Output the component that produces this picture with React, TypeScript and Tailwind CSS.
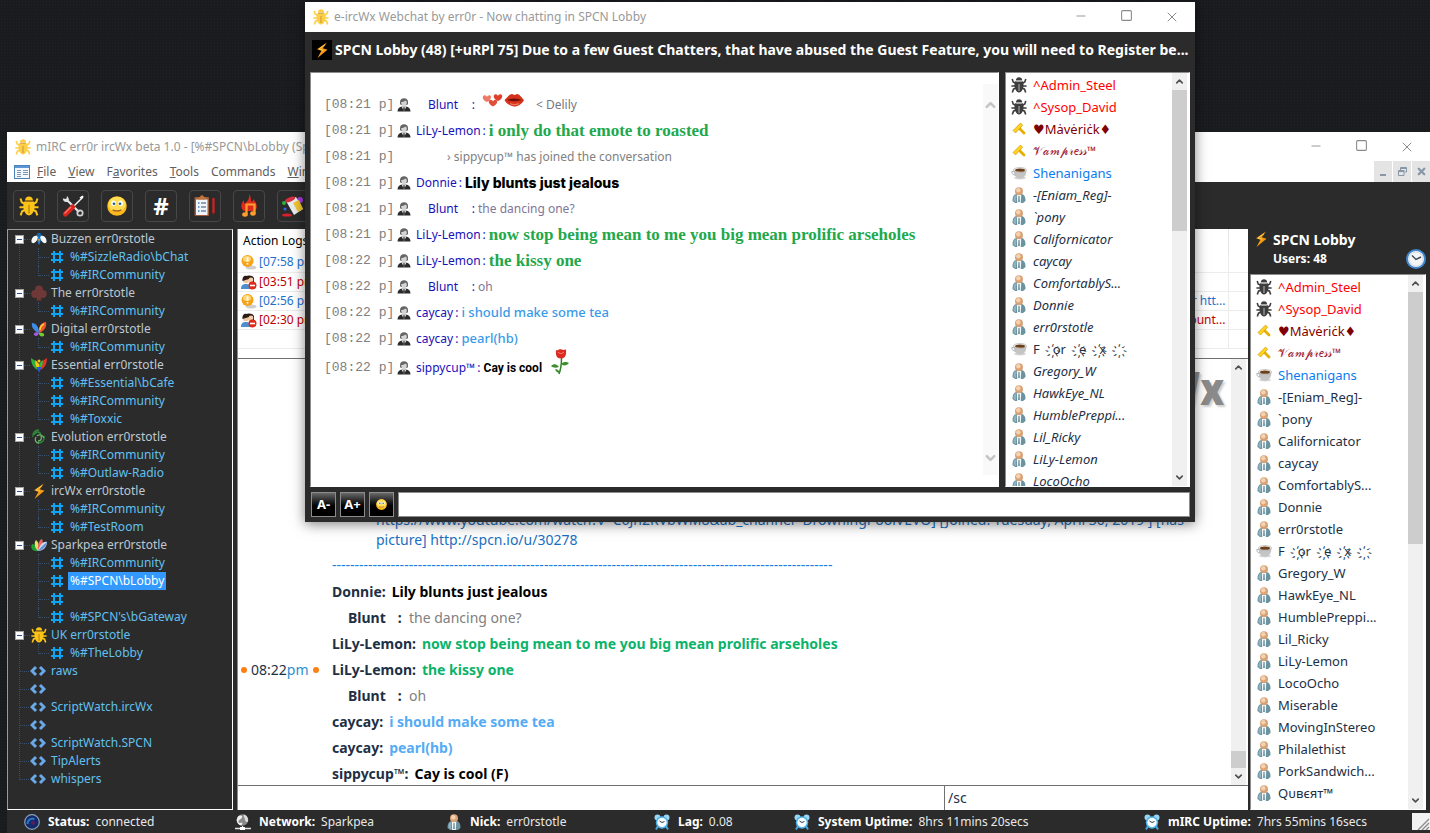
import type { ReactNode } from 'react';
import clsx from 'clsx';
import { ChevronDown, ChevronUp, Minus, Square, X } from 'lucide-react';

type IconName =
  | 'bee'
  | 'club'
  | 'butterfly'
  | 'peacock'
  | 'swirl'
  | 'bolt'
  | 'fan'
  | 'bug'
  | 'spider'
  | 'gavel'
  | 'cup'
  | 'user';

function BugShape({ fill, line }: { fill: string; line: string }) {
  return (
    <g>
      <path
        d="M5 6.5 2.2 5 1.2 2M11 6.5 13.8 5l1-3M4.500 9H.4M11.500 9h4.100M5 11l-2.500 1.200-1.200 3.300M11 11l2.500 1.200 1.200 3.300"
        stroke={fill}
        strokeWidth="1.6"
        fill="none"
      />
      <path d="M8 .3c1.900 0 3 1.200 3.200 3.200H4.800C5 1.500 6.100.3 8 .3z" fill={fill} />
      <path d="M4.200 4.300h7.600c1 2.200 1 4.900 0 7.500C10.900 14.300 9.600 15.500 8 15.500s-2.900-1.200-3.800-3.700c-1-2.600-1-5.300 0-7.500z" fill={fill} />
      <path d="M8 7v7M5.200 4.200h5.600" stroke={line} strokeWidth="0.8" />
    </g>
  );
}

function Icon({ name, className = 'h-4 w-4' }: { name: IconName; className?: string }) {
  return (
    <svg viewBox="0 0 16 16" className={clsx('shrink-0', className)} aria-hidden="true">
      {name === 'bug' && <BugShape fill="#fcc419" line="#a86d05" />}
      {name === 'spider' && <BugShape fill="#3d3d3d" line="#d8d8d8" />}
      {name === 'bee' && (
        <g>
          <path d="M7 4.500C3 4 0 7 .5 11c1 2 3 1 4 0L8 7zM9 4.500c4-.5 7 2.500 6.500 6.500-1 2-3 1-4 0L8 7z" fill="#f5f8fa" />
          <path d="M8 5c2.500 2 2 6 0 9-2-3-2.500-7 0-9z" fill="#1b7fd1" />
          <circle cx="8" cy="4" r="2.300" fill="#1668a8" />
          <path d="M6.800 8h2.400L8 11z" fill="#f0902c" />
        </g>
      )}
      {name === 'club' && (
        <g fill="#6f3838">
          <circle cx="8" cy="4.500" r="3.900" />
          <circle cx="4.200" cy="9" r="3.900" />
          <circle cx="11.800" cy="9" r="3.900" />
          <path d="M7 7h2l1.500 8.500h-5z" />
        </g>
      )}
      {name === 'butterfly' && (
        <g>
          <path d="M8 12C3 10 0 6 1 2c4 0 7 4 7 10z" fill="#3f8be8" />
          <path d="M8 12C7 6 10 1 15 1c1 5-2 9-7 11z" fill="#f0542a" />
          <path d="M8 12c3-1 6 0 5 3-3 1-5 0-5-3z" fill="#6fce2c" />
          <path d="M8 12c-3-2-6 0-5 2 2 2 4 1 5-2z" fill="#a85be0" />
          <path d="M9 9c0-3 2-5 4-6" stroke="#ffd438" strokeWidth="1.500" fill="none" />
        </g>
      )}
      {name === 'peacock' && (
        <g>
          <path d="M8 13C2 12 0 6 0 1l6 4z" fill="#2fae3a" />
          <path d="M8 13c6-1 8-7 8-12l-6 4z" fill="#e3342a" />
          <path d="M8 13C4 10 4 5 4.500 3L8 7z" fill="#f5c518" />
          <path d="M8 13c4-3 4-8 3.500-10L8 7z" fill="#2dbb40" />
          <circle cx="8" cy="4" r="1.500" fill="#f5c518" />
          <path d="M5.500 10h5L8 16z" fill="#2255dd" />
        </g>
      )}
      {name === 'swirl' && (
        <g fill="none" strokeWidth="1.300">
          <path d="M3 6C5 2 9 2 10 6M8 1C4 1 1 4 2 8M13 7c1 4-2 7-6 7" stroke="#2f8a3a" />
          <path d="M6 7c2-2 6-1 7 2M5 8c-2 3 0 6 3 6M10 7c1 3 0 5-3 5" stroke="#6cb46a" />
        </g>
      )}
      {name === 'bolt' && (
        <g>
          <path d="M13 .5 3 7.300l4.400 1.500L3.500 16 13.500 7.800 8.800 6.300z" fill="#f59a14" />
          <path d="M11 2.500 5 7l4 1.300" stroke="#ffd25a" strokeWidth="0.9" fill="none" />
        </g>
      )}
      {name === 'fan' && (
        <g>
          <path d="M7 14C1 15-1 10 1 7c3 0 5 3 6 7z" fill="#1f9e33" />
          <path d="M7 14C3 10 3 5 5 3c3 2 3 7 2 11z" fill="#e3e26a" />
          <path d="M7 14C6 8 8 3 11 2c2 4 0 9-4 12z" fill="#ee6a5a" />
          <path d="M7 14c2-7 6-10 9-9 0 5-4 9-9 9z" fill="#cfe0f5" />
          <path d="M7 14c2-3 5-6 9-9-1 5-4 8-9 9z" fill="#6a8fd8" />
        </g>
      )}
      {name === 'gavel' && (
        <g>
          <path d="M8 7l5 5" stroke="#e5ae00" strokeWidth="2.800" strokeLinecap="round" />
          <path d="M2 9.500 9.500 2l2.200 2.200L4.500 12z" fill="#ffd21f" stroke="#c99000" strokeWidth="0.6" />
        </g>
      )}
      {name === 'cup' && (
        <g>
          <ellipse cx="9" cy="13" rx="6" ry="1.500" fill="#d5d5d5" />
          <path d="M2.500 5h13c0 5-2.500 8.500-6.500 8.500S2.500 10 2.500 5z" fill="#c4c4c4" />
          <path d="M3.500 6.500H.8c0 3 1.700 3.500 3.700 3.500" stroke="#b5b5b5" fill="none" />
          <ellipse cx="9" cy="5" rx="6.500" ry="2.500" fill="#efefef" stroke="#999" strokeWidth="0.5" />
          <ellipse cx="9" cy="5.200" rx="5" ry="1.600" fill="#6b3f18" />
        </g>
      )}
      {name === 'user' && (
        <g>
          <path d="M1.500 14c0-4 1-6.500 4-7h5c3 .5 4 3 4 7L12 16H4z" fill="#6a93a0" />
          <path d="M2.500 13.500c0-3 .5-4.500 2.500-5.500v7.500z" fill="#8fb3bd" />
          <path d="M5.800 8h4.400L9.800 16H6.200z" fill="#f5f8fa" />
          <path d="M7.500 9h1l.3 6H7.200z" fill="#5a8290" />
          <circle cx="8" cy="4.200" r="4" fill="#d9a276" />
          <circle cx="7.300" cy="3.300" r="2.200" fill="#f3d2b2" />
        </g>
      )}
    </svg>
  );
}

function HashIcon() {
  return (
    <svg viewBox="0 0 12 12" className="h-3 w-3 shrink-0" aria-hidden="true">
      <path d="M3 0v12M9 0v12M0 3h12M0 9h12" stroke="#0ea5f5" strokeWidth="2" />
    </svg>
  );
}

function CodeIcon() {
  return (
    <svg viewBox="0 0 16 12" className="h-3 w-4 shrink-0" aria-hidden="true">
      <path d="M6 2 2 6l4 4M10 2l4 4-4 4" stroke="#6aa8e8" strokeWidth="3" fill="none" />
    </svg>
  );
}

function SuitIcon() {
  return (
    <svg viewBox="0 0 14 14" className="h-[14px] w-[14px] shrink-0" aria-hidden="true">
      <path d="M.5 13.500c0-3 2-4.500 4.500-5h4c2.500.5 4.500 2 4.500 5z" fill="#2b2b2b" />
      <path d="M4.500 8.500h5l-2.500 4.500z" fill="#e8e8e8" />
      <path d="M6.500 9h1l.4 3-.9 1-.9-1z" fill="#333" />
      <path d="M3 4C3 1.500 4.500.2 7 .2S11 1.500 11 4v2l-1 1H4L3 6z" fill="#666" />
      <path d="M4.200 4c1.500 0 3-.5 4-1.500.8.5 1.500 1 1.600 1.500 0 2.500-1 4.500-2.800 4.500S4.200 6.500 4.200 4z" fill="#d5d5d5" />
    </svg>
  );
}

function AlarmIcon() {
  return (
    <svg viewBox="0 0 16 16" className="h-4 w-4 shrink-0" aria-hidden="true">
      <circle cx="3.500" cy="3.500" r="3" fill="#9ad6f5" />
      <circle cx="12.500" cy="3.500" r="3" fill="#9ad6f5" />
      <path d="M4 12l-2 3.500M12 12l2 3.500" stroke="#4aa3d8" strokeWidth="2" />
      <circle cx="8" cy="8.500" r="6.200" fill="#4db2e8" />
      <circle cx="8" cy="8.500" r="4.700" fill="#f7fbfe" />
      <path d="M8 8.500 5.500 7M8 8.500l2.500-1" stroke="#345" strokeWidth="1" />
    </svg>
  );
}

function SmileyIcon({ className }: { className: string }) {
  return (
    <svg viewBox="0 0 18 18" className={className} aria-hidden="true">
      <circle cx="9" cy="9" r="8.800" fill="#ffb91a" />
      <ellipse cx="9" cy="7.500" rx="7.800" ry="6.800" fill="#ffdd55" />
      <ellipse cx="5.800" cy="6.500" rx="2.100" ry="2.500" fill="#fff" />
      <ellipse cx="12.200" cy="6.500" rx="2.100" ry="2.500" fill="#fff" />
      <circle cx="6.300" cy="7" r="1.200" fill="#245a8c" />
      <circle cx="11.700" cy="7" r="1.200" fill="#245a8c" />
      <path d="M5 12.500c2 1.300 6 1.300 8 0" stroke="#a8611b" strokeWidth="1.200" fill="none" />
    </svg>
  );
}

function ToolsIcon() {
  return (
    <svg viewBox="0 0 22 22" className="h-[22px] w-[22px]" aria-hidden="true">
      <path d="M4 4l13 13" stroke="#e6e6e6" strokeWidth="2.200" />
      <path d="M.8 3.500C1 6.500 3.500 8 6 6.500L7 4 5 .8 4.500 4z" fill="#dfe3e6" />
      <circle cx="18" cy="18" r="2.700" fill="none" stroke="#cfd3d6" strokeWidth="1.700" />
      <path d="M19 4l-8 8" stroke="#f5f5f5" strokeWidth="1.500" />
      <path d="M17.500 2.500 20.500.5l1.200 1.200-2 3z" fill="#fff" />
      <path d="M10.500 12 3.500 19" stroke="#d9261c" strokeWidth="5" strokeLinecap="round" />
      <path d="M9 12l-6.500 6.500" stroke="#ff7a6e" strokeWidth="1.200" />
    </svg>
  );
}

function ClipboardIcon() {
  return (
    <svg viewBox="0 0 22 22" className="h-[22px] w-[22px]" aria-hidden="true">
      <rect x="0.500" y="2" width="14.500" height="19" rx="1" fill="#a05c38" />
      <rect x="2" y="4.500" width="11.500" height="15.500" fill="#f1f5f9" />
      <path d="M4 4.500v-2h2c0-3 4-3 4 0h2v2z" fill="#c4753c" />
      <path d="M4 8h1.500M4 12h1.500M4 16h1.500" stroke="#3f7fc0" strokeWidth="1.600" />
      <path d="M7 8h5M7 12h5M7 16h5" stroke="#6f87a0" strokeWidth="1.300" />
      <path d="M19.500 3v15" stroke="#c42424" strokeWidth="2.400" />
      <path d="M18.300 18h2.400l-1.200 3z" fill="#8e1212" />
    </svg>
  );
}

function FireNoteIcon() {
  return (
    <svg viewBox="0 0 22 24" className="h-6 w-[22px]" aria-hidden="true">
      <path d="M11 0c3 4 1 6 3 8 1-1 1-2 1-3 4 4 5 9 2 12H6C2 14 3 9 6 6c0 2 0 3 1 4 2-3 5-5 4-10z" fill="#e02a1d" />
      <path d="M8.500 20v-9.500h8V19" stroke="#ff9d2e" strokeWidth="2.200" fill="none" />
      <ellipse cx="7" cy="20.500" rx="2.800" ry="2.200" fill="#ff9d2e" />
      <ellipse cx="15" cy="19.500" rx="2.800" ry="2.200" fill="#ff9d2e" />
    </svg>
  );
}

function PaintIcon() {
  return (
    <svg viewBox="0 0 24 24" className="h-6 w-6" aria-hidden="true">
      <circle cx="3" cy="9" r="2" fill="#24b53a" />
      <circle cx="4" cy="15" r="1.500" fill="#3568e8" />
      <circle cx="19" cy="6" r="3" fill="#a33be0" />
      <ellipse cx="6" cy="21" rx="5" ry="1.600" fill="#d8202f" />
      <path d="M5 7l10-4 7 12-9 6z" fill="#e9edf0" />
      <path d="M12 9l6-3 4 9-5 3z" fill="#f0c52c" />
      <ellipse cx="9" cy="5.500" rx="5.500" ry="2.200" transform="rotate(-22 9 5.500)" fill="#d63040" />
    </svg>
  );
}

const TOOLBAR: { label: string; icon: ReactNode }[] = [
  { label: 'Connect', icon: <Icon name="bug" className="h-5 w-5" /> },
  { label: 'Options', icon: <ToolsIcon /> },
  { label: 'Smileys', icon: <SmileyIcon className="h-5 w-5" /> },
  { label: 'Channels', icon: <span className="text-2xl leading-6 font-bold text-white">#</span> },
  { label: 'Notes', icon: <ClipboardIcon /> },
  { label: 'Music', icon: <FireNoteIcon /> },
  { label: 'Colours', icon: <PaintIcon /> },
];

interface Network {
  name: string;
  icon: IconName;
  active?: boolean;
  channels: string[];
}

const NETWORKS: Network[] = [
  { name: 'Buzzen err0rstotle', icon: 'bee', channels: ['%#SizzleRadio\\bChat', '%#IRCommunity'] },
  { name: 'The err0rstotle', icon: 'club', channels: ['%#IRCommunity'] },
  { name: 'Digital err0rstotle', icon: 'butterfly', channels: ['%#IRCommunity'] },
  { name: 'Essential err0rstotle', icon: 'peacock', channels: ['%#Essential\\bCafe', '%#IRCommunity', '%#Toxxic'] },
  { name: 'Evolution err0rstotle', icon: 'swirl', channels: ['%#IRCommunity', '%#Outlaw-Radio'] },
  { name: 'ircWx err0rstotle', icon: 'bolt', channels: ['%#IRCommunity', '%#TestRoom'] },
  {
    name: 'Sparkpea err0rstotle',
    icon: 'fan',
    channels: ['%#IRCommunity', '%#SPCN\\bLobby', '', "%#SPCN's\\bGateway"],
  },
  { name: 'UK err0rstotle', icon: 'bug', active: true, channels: ['%#TheLobby'] },
];

const WINDOWS = ['raws', '', 'ScriptWatch.ircWx', '', 'ScriptWatch.SPCN', 'TipAlerts', 'whispers'];

const SELECTED = '%#SPCN\\bLobby';

interface User {
  nick: string;
  icon?: IconName;
  className?: string;
}

const USERS: User[] = [
  { nick: '^Admin_Steel', icon: 'spider', className: 'text-[#ff0000]' },
  { nick: '^Sysop_David', icon: 'spider', className: 'text-[#ff0000]' },
  { nick: '♥Mȧvėriċk♦', icon: 'gavel', className: 'text-[#7f0000]' },
  { nick: '𝒱𝒶𝓂𝓅𝓇𝑒𝓈𝓈™', icon: 'gavel', className: 'text-[#a02030] text-xs' },
  { nick: 'Shenanigans', icon: 'cup', className: 'text-[#0a7cf0]' },
  { nick: '-[Eniam_Reg]-' },
  { nick: '`pony' },
  { nick: 'Californicator' },
  { nick: 'caycay' },
  { nick: 'ComfortablyS...' },
  { nick: 'Donnie' },
  { nick: 'err0rstotle' },
  { nick: 'F\u2003҉or\u2003҉e\u2003҉x\u2003҉', icon: 'cup', className: 'text-[#1d3045]' },
  { nick: 'Gregory_W' },
  { nick: 'HawkEye_NL' },
  { nick: 'HumblePreppi...' },
  { nick: 'Lil_Ricky' },
  { nick: 'LiLy-Lemon' },
  { nick: 'LocoOcho' },
  { nick: 'Miserable' },
  { nick: 'MovingInStereo' },
  { nick: 'Philalethist' },
  { nick: 'PorkSandwich...' },
  { nick: 'Qᴜʙєят™' },
];

const MAIN_CHAT = [
  { nick: 'Donnie:', text: 'Lily blunts just jealous', className: 'font-bold text-black' },
  { nick: 'Blunt', text: 'the dancing one?', className: 'text-[#808080]' },
  {
    nick: 'LiLy-Lemon:',
    text: 'now stop being mean to me you big mean prolific arseholes',
    className: 'font-bold text-[#0bb36b]',
  },
  { nick: 'LiLy-Lemon:', text: 'the kissy one', className: 'font-bold text-[#0bb36b]', stamp: true },
  { nick: 'Blunt', text: 'oh', className: 'text-[#808080]' },
  { nick: 'caycay:', text: 'i should make some tea', className: 'font-bold text-[#55acf5]' },
  { nick: 'caycay:', text: 'pearl(hb)', className: 'font-bold text-[#55acf5]' },
  { nick: 'sippycup™:', text: 'Cay is cool (F)', className: 'font-bold text-black' },
];

const LOGS = [
  { time: '[07:58 pm]', tail: '', alert: false },
  { time: '[03:51 pm]', tail: '', alert: true },
  { time: '[02:56 pm]', tail: 'for htt...', alert: false },
  { time: '[02:30 pm]', tail: 'account...', alert: true },
];

const STATUS: { label: string; value: string; icon: ReactNode }[] = [
  {
    label: 'Status:',
    value: 'connected',
    icon: (
      <svg viewBox="0 0 16 16" className="h-4 w-4 shrink-0" aria-hidden="true">
        <circle cx="8" cy="8" r="7.300" fill="#13296b" stroke="#8aa0b4" strokeWidth="1.200" />
        <path d="M3.500 10c0-4 3-6 7-5" stroke="#2c78c0" strokeWidth="2" fill="none" />
        <circle cx="9" cy="9" r="2" fill="#5a1f5a" />
      </svg>
    ),
  },
  {
    label: 'Network:',
    value: 'Sparkpea',
    icon: (
      <svg viewBox="0 0 16 16" className="h-4 w-4 shrink-0" aria-hidden="true">
        <circle cx="7.500" cy="6" r="5.800" fill="#8a8a8a" />
        <path d="M3 2.500c2-2 5-1 4 1S3 6 3.500 8c1 2 3 0 4 1l-1 2.500C3 11 1.500 8 1.700 5.500z" fill="#f0f0f0" />
        <path d="M9 .5c3 1 4.500 4 4 7-1.500 1-3 0-3-2S8 3 9 .5z" fill="#dcdcdc" />
        <path d="M0 14.500h16M7.500 12v2" stroke="#e5e5e5" strokeWidth="1.300" />
        <rect x="5" y="13" width="5" height="3" fill="#fff" />
      </svg>
    ),
  },
  { label: 'Nick:', value: 'err0rstotle', icon: <Icon name="user" /> },
  { label: 'Lag:', value: '0.08', icon: <AlarmIcon /> },
  { label: 'System Uptime:', value: '8hrs 11mins 20secs', icon: <AlarmIcon /> },
  { label: 'mIRC Uptime:', value: '7hrs 55mins 16secs', icon: <AlarmIcon /> },
];

function WindowButtons() {
  return (
    <div className="ml-auto flex text-[#8a8a8a]">
      <button type="button" aria-label="Minimize" className="flex w-[45px] justify-center">
        <Minus className="h-[14px] w-[14px]" strokeWidth={1.5} />
      </button>
      <button type="button" aria-label="Maximize" className="flex w-[46px] justify-center">
        <Square className="h-[13px] w-[13px]" strokeWidth={2} strokeLinejoin="miter" />
      </button>
      <button type="button" aria-label="Close" className="flex w-[46px] justify-center">
        <X className="h-4 w-4" strokeWidth={1.5} />
      </button>
    </div>
  );
}

function ScrollBar({ className, thumb }: { className: string; thumb: string }) {
  return (
    <div className={clsx('flex shrink-0 flex-col bg-[#f0f0f0] text-[#505050]', className)}>
      <ChevronUp className="h-[17px] w-full shrink-0 p-0.5" strokeWidth={3.5} />
      <div className="flex flex-1 flex-col">
        <div className={clsx('bg-[#cdcdcd]', thumb)} />
      </div>
      <ChevronDown className="h-[17px] w-full shrink-0 p-0.5" strokeWidth={3.5} />
    </div>
  );
}

function UserList({ italic, thumb }: { italic?: boolean; thumb: string }) {
  return (
    <div className="flex min-h-0 flex-1 overflow-hidden border border-[#8c8c8c] border-r-white border-b-white bg-white">
      <ul className="min-w-0 flex-1 overflow-hidden pt-px pl-[5px] text-[13px] leading-[22px]">
        {USERS.map((user) => (
          <li
            key={user.nick}
            className={clsx(
              'flex h-[22px] items-center gap-1.5 whitespace-nowrap',
              user.className ?? 'text-[#1d3045]',
              italic && !user.icon && 'italic',
            )}
          >
            <Icon name={user.icon ?? 'user'} />
            <span>{user.nick}</span>
          </li>
        ))}
      </ul>
      <ScrollBar className="mr-0.5 w-[15px]" thumb={thumb} />
    </div>
  );
}

function ChannelTree() {
  return (
    <nav className="w-[226px] shrink-0 border border-[#9a9a9a] border-r-white border-b-white text-xs leading-[18px]">
      <ul className="relative">
        <li className="absolute top-3 left-[11px] h-[538px] border-l border-dotted border-[#34506c]" aria-hidden="true" />
        {NETWORKS.map((network) => (
          <li key={network.name}>
            <div className="relative flex h-[18px] items-center pl-[7px]">
              <span className="flex h-[9px] w-[9px] items-center justify-center border border-[#a5a5a5] bg-white">
                <span className="h-px w-[5px] bg-[#2a4a9a]" />
              </span>
              <span className="mr-px w-1.5 border-t border-dotted border-[#34506c]" />
              <Icon name={network.icon} />
              <span className={clsx('pl-1', network.active ? 'text-[#62c0f0]' : 'text-[#bcc8d2]')}>{network.name}</span>
            </div>
            <ul className="ml-[30px]">
              {network.channels.map((channel, i) => (
                <li key={i} className="flex h-[18px] items-center">
                  <span
                    className={clsx(
                      'w-[11px] self-start border-l border-dotted border-[#34506c]',
                      i === network.channels.length - 1 ? 'h-[10px]' : 'h-[18px]',
                    )}
                  >
                    <span className="block h-[10px] border-b border-dotted border-[#34506c]" />
                  </span>
                  <span className="w-0.5" />
                  <HashIcon />
                  <button
                    type="button"
                    aria-label={channel || 'Unnamed channel'}
                    className={clsx(
                      'ml-[5px] h-[18px] pr-0.5 pl-0.5 whitespace-nowrap',
                      channel === SELECTED ? 'bg-[#3399ff] text-white' : 'text-[#62c0f0]',
                    )}
                  >
                    {channel}
                  </button>
                </li>
              ))}
            </ul>
          </li>
        ))}
        {WINDOWS.map((name, i) => (
          <li key={i} className="flex h-[18px] items-center pl-[11px] text-[#62c0f0]">
            <span className="mr-px w-2.5 border-t border-dotted border-[#34506c]" />
            <CodeIcon />
            <span className="pl-[5px]">{name}</span>
          </li>
        ))}
      </ul>
    </nav>
  );
}

function ActionLogs() {
  return (
    <div className="h-[130px] shrink-0 overflow-hidden border-b border-[#707070] bg-white">
      <table className="w-full table-fixed text-xs">
        <thead>
          <tr className="h-6">
            <th className="border-r border-[#e5e5e5] pl-[5px] text-left font-normal text-black">Action Logs</th>
            <th className="w-5" />
          </tr>
        </thead>
        <tbody>
          {LOGS.map((log) => (
            <tr
              key={log.time}
              className={clsx('h-[19px] border-b border-[#ececec]', log.alert ? 'text-[#c00000]' : 'text-[#1e70cc]')}
            >
              <td className="border-r border-[#ececec] p-0">
                <div className="flex h-[18px] items-center pr-0.5 pl-[3px]">
                  <svg viewBox="0 0 16 16" className="mr-0.5 h-4 w-4" aria-hidden="true">
                    {log.alert ? (
                      <g>
                        <circle cx="5" cy="6" r="3.200" fill="#f0c8a4" />
                        <path d="M1.500 7C1 2 4 1 6 2c1-1 6-1 7 2v5H9L8 5z" fill="#2e1c14" />
                        <path d="M0 15c0-4 2-5 5-5s4 1 5 5z" fill="#4b8fd0" />
                        <circle cx="10" cy="6" r="2.400" fill="#f3cfae" />
                        <circle cx="11.500" cy="11.500" r="4" fill="#dd2a1b" />
                        <path d="M9 11.500h5" stroke="#fff" strokeWidth="1.600" />
                      </g>
                    ) : (
                      <g>
                        <ellipse cx="10" cy="13.500" rx="5.500" ry="2" fill="#cfcfcf" />
                        <circle cx="6.500" cy="7" r="6" fill="#f7a31a" />
                        <ellipse cx="6" cy="5" rx="4" ry="3" fill="#ffd778" />
                        <path d="M6.500 3.500v4M6.500 9v1.500" stroke="#fff" strokeWidth="1.700" />
                      </g>
                    )}
                  </svg>
                  <span>{log.time}</span>
                  <span className="ml-auto">{log.tail}</span>
                </div>
              </td>
              <td />
            </tr>
          ))}
          <tr className="h-[19px] border-b border-[#ececec]">
            <td className="border-r border-[#ececec]" />
            <td />
          </tr>
        </tbody>
      </table>
    </div>
  );
}

function ChatLog() {
  return (
    <div className="relative flex min-h-0 flex-1 overflow-hidden bg-white">
      <div className="absolute top-0 right-6 font-['Roboto',sans-serif] text-[46px] leading-[60px] font-black text-[#8a8a8a] [text-shadow:2px_2px_2px_#d0d0d0]">
        ircWx
      </div>
      <div className="-mb-0.5 flex min-w-0 flex-1 flex-col justify-end text-sm">
        <p className="mb-[3px] ml-[138px] max-w-[830px] leading-5 text-[#1a6fc0]">
          https://www.youtube.com/watch?v=C6Jh2RVbWM8&amp;ab_channel=DrowningPoolVEVO] [Joined: Tuesday, April 30, 2019 ]
          [has
          <br />
          picture] http://spcn.io/u/30278
        </p>
        <p className="ml-[94px] h-[26px] leading-6 whitespace-nowrap text-[#1a80e0]">{'-'.repeat(111)}</p>
        {MAIN_CHAT.map((line, i) => (
          <div key={i} className="flex h-[26px] items-center whitespace-nowrap">
            <div className="flex w-[94px] items-center gap-1 pl-[3px] text-[#1d3045]">
              {line.stamp && (
                <>
                  <span className="h-1.5 w-1.5 rounded-full bg-[#ff7f11]" />
                  <span>
                    08:22<span className="text-[#2b8fcf]">pm</span>
                  </span>
                  <span className="h-1.5 w-1.5 rounded-full bg-[#ff7f11]" />
                </>
              )}
            </div>
            {line.nick === 'Blunt' ? (
              <span className="flex w-[77px] gap-3 pl-4 font-bold text-[#1d3045]">
                <span>Blunt</span>
                <span>:</span>
              </span>
            ) : (
              <span className="pr-1.5 font-bold text-[#1d3045]">{line.nick}</span>
            )}
            <span className={line.className}>{line.text}</span>
          </div>
        ))}
      </div>
      <ScrollBar className="mr-0.5 w-[15px]" thumb="mt-auto h-[17px]" />
    </div>
  );
}

function MainWindow() {
  return (
    <section className="absolute top-[132px] right-0 bottom-0 left-[7px] flex flex-col bg-[#2b2b2b]">
      <header className="flex h-[29px] shrink-0 items-center bg-white">
        <Icon name="bug" className="mr-[5px] ml-2 h-4 w-4 opacity-80" />
        <h1 className="text-xs text-[#999]">mIRC err0r ircWx beta 1.0 - [%#SPCN\bLobby (Sparkpea)]</h1>
        <WindowButtons />
      </header>
      <div className="flex h-[21px] shrink-0 items-center bg-white pl-[7px] text-xs text-[#606060]">
        <svg viewBox="0 0 16 14" className="h-[14px] w-4" aria-hidden="true">
          <rect x="0.500" y="0.500" width="15" height="13" fill="#f4f8fc" stroke="#4a80bc" />
          <rect x="1" y="1" width="14" height="2" fill="#5b96d6" />
          <path d="M3 5.500h4M3 7.500h4M3 9.500h4M3 11.500h4M9 5.500h5M9 7.500h5M9 9.500h5" stroke="#7a98b8" />
        </svg>
        <div className="flex gap-3 pl-[7px]">
          <button type="button"><u>F</u>ile</button>
          <button type="button"><u>V</u>iew</button>
          <button type="button">F<u>a</u>vorites</button>
          <button type="button"><u>T</u>ools</button>
          <button type="button">Commands</button>
          <button type="button"><u>W</u>indow</button>
        </div>
        <div className="ml-auto flex h-full gap-px text-[#8797a8]">
          <button type="button" aria-label="Minimize child" className="flex w-[18px] items-end justify-center bg-[#e4e4e4] pb-1.5">
            <span className="h-0.5 w-1.5 bg-[#8797a8]" />
          </button>
          <button type="button" aria-label="Restore child" className="flex w-[18px] items-center justify-center bg-[#e4e4e4]">
            <svg viewBox="0 0 9 9" className="h-[9px] w-[9px]" fill="none" stroke="currentColor" aria-hidden="true">
              <path d="M2.500 3V.5h6v4.500H6.500M3 1.500h5M.5 3.500h5.500v5H.5zM1 4.500h5" />
            </svg>
          </button>
          <button type="button" aria-label="Close child" className="flex w-[18px] items-center justify-center bg-[#e4e4e4]">
            <X className="h-[11px] w-[11px]" strokeWidth={5} />
          </button>
        </div>
      </div>
      <div className="flex h-[47px] shrink-0 items-center gap-3 pl-1.5">
        {TOOLBAR.map((tool) => (
          <button
            key={tool.label}
            type="button"
            aria-label={tool.label}
            className="flex h-8 w-8 items-center justify-center rounded-sm border border-[#474747]"
          >
            {tool.icon}
          </button>
        ))}
      </div>
      <div className="flex min-h-0 flex-1">
        <ChannelTree />
        <div className="ml-1 flex min-w-0 flex-1 flex-col border-l border-[#8c8c8c] bg-white">
          <ActionLogs />
          <ChatLog />
          <div className="flex h-[25px] shrink-0 border-t border-[#707070] text-sm">
            <input aria-label="Server command" className="w-[70%] border-r border-[#707070] bg-white" />
            <input aria-label="Message" defaultValue="/sc" className="min-w-0 flex-1 bg-white px-[3px] text-[#1d3045]" />
          </div>
        </div>
        <aside className="flex w-[182px] shrink-0 flex-col pr-1 pl-0.5">
          <div className="flex h-[45px] shrink-0 font-bold text-white">
            <Icon name="bolt" className="mt-0.5 ml-px h-4 w-5" />
            <div className="flex-1 pl-0.5">
              <div className="text-sm leading-[22px]">SPCN Lobby</div>
              <div className="text-xs leading-4">Users: 48</div>
            </div>
            <svg viewBox="0 0 20 20" className="mt-5 h-5 w-5" aria-hidden="true">
              <circle cx="10" cy="10" r="9" fill="#f4f6f8" stroke="#3f86cc" strokeWidth="2" />
              <circle cx="10" cy="10" r="7" fill="none" stroke="#cdd6de" strokeWidth="0.8" />
              <path d="M6 6.500 10 10.500l5-2.500" stroke="#3c4a58" strokeWidth="1.400" fill="none" />
            </svg>
          </div>
          <UserList thumb="h-[252px]" />
        </aside>
      </div>
      <footer className="flex h-[23px] shrink-0 items-center pl-[17px] text-xs text-[#e8e8e8]">
        <dl className="grid flex-1 grid-cols-[211fr_211fr_208fr_140fr_350fr_268fr] whitespace-nowrap">
          {STATUS.map((item) => (
            <div key={item.label} className="flex items-center">
              {item.icon}
              <dt className="pr-1.5 pl-2 font-bold text-white">{item.label}</dt>
              <dd>{item.value}</dd>
            </div>
          ))}
        </dl>
        <svg viewBox="0 0 18 17" className="h-[17px] w-[18px]" aria-hidden="true">
          <rect width="18" height="17" fill="#f2f2f2" />
          <path d="M6 17 17 6M10 17l7-7M14 17l3-3" stroke="#8c8c8c" strokeWidth="1.400" />
        </svg>
      </footer>
    </section>
  );
}

function HeartsKiss() {
  return (
    <svg viewBox="0 0 42 16" className="mr-2 mb-2 ml-1 h-4 w-[42px]" aria-hidden="true">
      <path d="M5 9C0 7 0 3 2 2.500 3.500 2 4.500 3 5 4c.5-1 1.500-2 3-1.500C10 3 9 7 5 9z" fill="#ec7a66" />
      <path d="M16 8c-5-2-5-6-3-6.500C14.500 1 15.500 2 16 3c.5-1 1.500-2 3-1.500C21 2 21 6 16 8z" fill="#e0402b" />
      <path d="M11 13.500C6 11 6 7.500 8 7c1.500-.5 2.500.5 3 1.500.5-1 1.500-2 3-1.500 2 .5 2 4-3 6.500z" fill="#e24f38" />
      <path d="M22.500 7c3-3 5-6 7.500-6 1 0 1.500 1 2.500 1S34 1 35 1c2.500 0 4 3 7 6-2 4-6 6.500-9.500 6.500S24.500 11 22.500 7z" fill="#d5321c" />
      <path d="M25 7c5-2 10-2 15 0-5 1.500-10 1.500-15 0z" fill="#6e0f0a" />
      <path d="M28 10.500c3 1.500 6 1.500 9 0" stroke="#f07a60" strokeWidth="1.200" fill="none" />
    </svg>
  );
}

function Rose() {
  return (
    <svg viewBox="0 0 20 26" className="mb-3 ml-2 h-[26px] w-5" aria-hidden="true">
      <path d="M11.500 9c0 6-.5 11-2.500 16" stroke="#2f7d27" strokeWidth="1.500" fill="none" />
      <path d="M1 17c3-3 6-2 8 1-3 1-6 1-8-1zM11 15c3-3 6-2 8-1-2 3-6 3-8 1zM5 20c1 3 3 4 5 4-1-3-3-4-5-4z" fill="#3c8f2e" />
      <path d="M6 1c1 1 2 0 3-.5C10 0 12 0 13 1l3-.5C16.500 6 15.500 9.500 11 9.500S5.500 6 6 1z" fill="#dc2a20" />
      <path d="M8 3c2 2 4 2 6 0" stroke="#ff8a7a" fill="none" />
    </svg>
  );
}

interface PopupLine {
  time: string;
  nick?: string;
  body: ReactNode;
}

const serifGreen = "font-['Liberation_Serif',serif] text-[17px] font-bold text-[#22a84a]";
const blueScript = 'text-[13px] font-medium text-[#3a9ae8]';

const POPUP_LINES: PopupLine[] = [
  {
    time: '08:21',
    nick: 'Blunt',
    body: (
      <span className="flex items-center text-xs text-[#77777f]">
        <HeartsKiss /> <span className="pl-1">&lt; Delily</span>
      </span>
    ),
  },
  { time: '08:21', nick: 'LiLy-Lemon', body: <span className={serifGreen}>i only do that emote to roasted</span> },
  {
    time: '08:21',
    body: <span className="pl-[50px] text-xs text-[#808080]">› sippycup™ has joined the conversation</span>,
  },
  {
    time: '08:21',
    nick: 'Donnie',
    body: <span className="font-['Inter',sans-serif] text-sm font-extrabold text-black">Lily blunts just jealous</span>,
  },
  { time: '08:21', nick: 'Blunt', body: <span className="text-xs text-[#80769a]">the dancing one?</span> },
  {
    time: '08:21',
    nick: 'LiLy-Lemon',
    body: <span className={serifGreen}>now stop being mean to me you big mean prolific arseholes</span>,
  },
  { time: '08:22', nick: 'LiLy-Lemon', body: <span className={serifGreen}>the kissy one</span> },
  { time: '08:22', nick: 'Blunt', body: <span className="text-xs text-[#80769a]">oh</span> },
  { time: '08:22', nick: 'caycay', body: <span className={blueScript}>i should make some tea</span> },
  { time: '08:22', nick: 'caycay', body: <span className={blueScript}>pearl(hb)</span> },
  {
    time: '08:22',
    nick: 'sippycup™',
    body: (
      <span className="flex items-center font-['Roboto',sans-serif] text-xs font-bold text-black">
        Cay is cool <Rose />
      </span>
    ),
  },
];

function PopupChat() {
  return (
    <div className="flex min-w-0 flex-1 border border-[#8c8c8c] border-r-white border-b-white bg-white">
      <div className="min-w-0 flex-1 overflow-hidden pt-[19px] pl-[13px]">
        {POPUP_LINES.map((line, i) => (
          <div
            key={i}
            className={clsx('flex items-center whitespace-nowrap', i === POPUP_LINES.length - 1 ? 'h-8' : 'h-[26px]')}
          >
            <span className="w-[73px] font-['Liberation_Mono',monospace] text-[13px] text-[#808080]">[{line.time} p]</span>
            {line.nick && (
              <>
                <SuitIcon />
                <span className={clsx('flex text-xs text-[#1a10b8]', line.nick === 'Blunt' ? 'w-16 pl-[17px]' : 'pl-[5px]')}>
                  {line.nick}
                  <span className={clsx(line.nick === 'Blunt' ? 'ml-auto' : 'pl-0.5')}>:</span>
                </span>
                <span className="w-[3px]" />
              </>
            )}
            {line.body}
          </div>
        ))}
      </div>
      <div className="my-[11px] flex w-[15px] flex-col justify-between bg-[#f9f9f9] pt-3 pb-2 text-[#c4c4c4]">
        <ChevronUp className="h-[18px] w-[15px]" strokeWidth={4} />
        <ChevronDown className="h-[18px] w-[15px]" strokeWidth={4} />
      </div>
    </div>
  );
}

const popupButton =
  'flex h-[25px] w-[25px] items-center justify-center border border-[#8c8c8c] bg-linear-to-b from-[#6a6a6a] to-black to-70% text-[13px] font-bold text-white';

function PopupWindow() {
  return (
    <section className="absolute top-0.5 right-[235px] left-[305px] flex h-[520px] flex-col bg-[#2b2b2b] shadow-[0_2px_12px_rgba(0,0,0,0.5)]">
      <header className="flex h-[30px] shrink-0 items-center bg-white">
        <Icon name="bug" className="mr-[5px] ml-2 h-4 w-4 opacity-80" />
        <h2 className="text-xs text-[#999]">e-ircWx Webchat by err0r - Now chatting in SPCN Lobby</h2>
        <WindowButtons />
      </header>
      <div className="flex h-10 shrink-0 items-center pb-1 pl-[7px]">
        <span className="bg-black p-0.5">
          <Icon name="bolt" />
        </span>
        <p className="overflow-hidden pl-[3px] text-sm font-bold text-ellipsis whitespace-nowrap text-white">
          SPCN Lobby (48) [+uRPl 75] Due to a few Guest Chatters, that have abused the Guest Feature, you will need to
          Register be...
        </p>
      </div>
      <div className="flex min-h-0 flex-1 gap-1.5 pr-[5px] pl-[5px]">
        <PopupChat />
        <div className="flex w-[185px] shrink-0 flex-col">
          <UserList italic thumb="h-[141px]" />
        </div>
      </div>
      <div className="flex h-[35px] shrink-0 gap-1 py-[5px] pr-[5px] pl-1.5">
        <button type="button" className={popupButton}>
          A-
        </button>
        <button type="button" className={popupButton}>
          A+
        </button>
        <button type="button" aria-label="Insert smiley" className={popupButton}>
          <SmileyIcon className="h-[11px] w-[11px]" />
        </button>
        <input aria-label="Chat message" className="min-w-0 flex-1 border border-[#8c8c8c] bg-white" />
      </div>
    </section>
  );
}

export default function App() {
  return (
    <main className="relative h-screen min-h-[600px] overflow-hidden bg-[#191b1f] bg-[radial-gradient(#1f2226_1px,transparent_1px)] bg-[length:3px_3px] font-['Noto_Sans','DejaVu_Sans',sans-serif]">
      <MainWindow />
      <PopupWindow />
    </main>
  );
}
